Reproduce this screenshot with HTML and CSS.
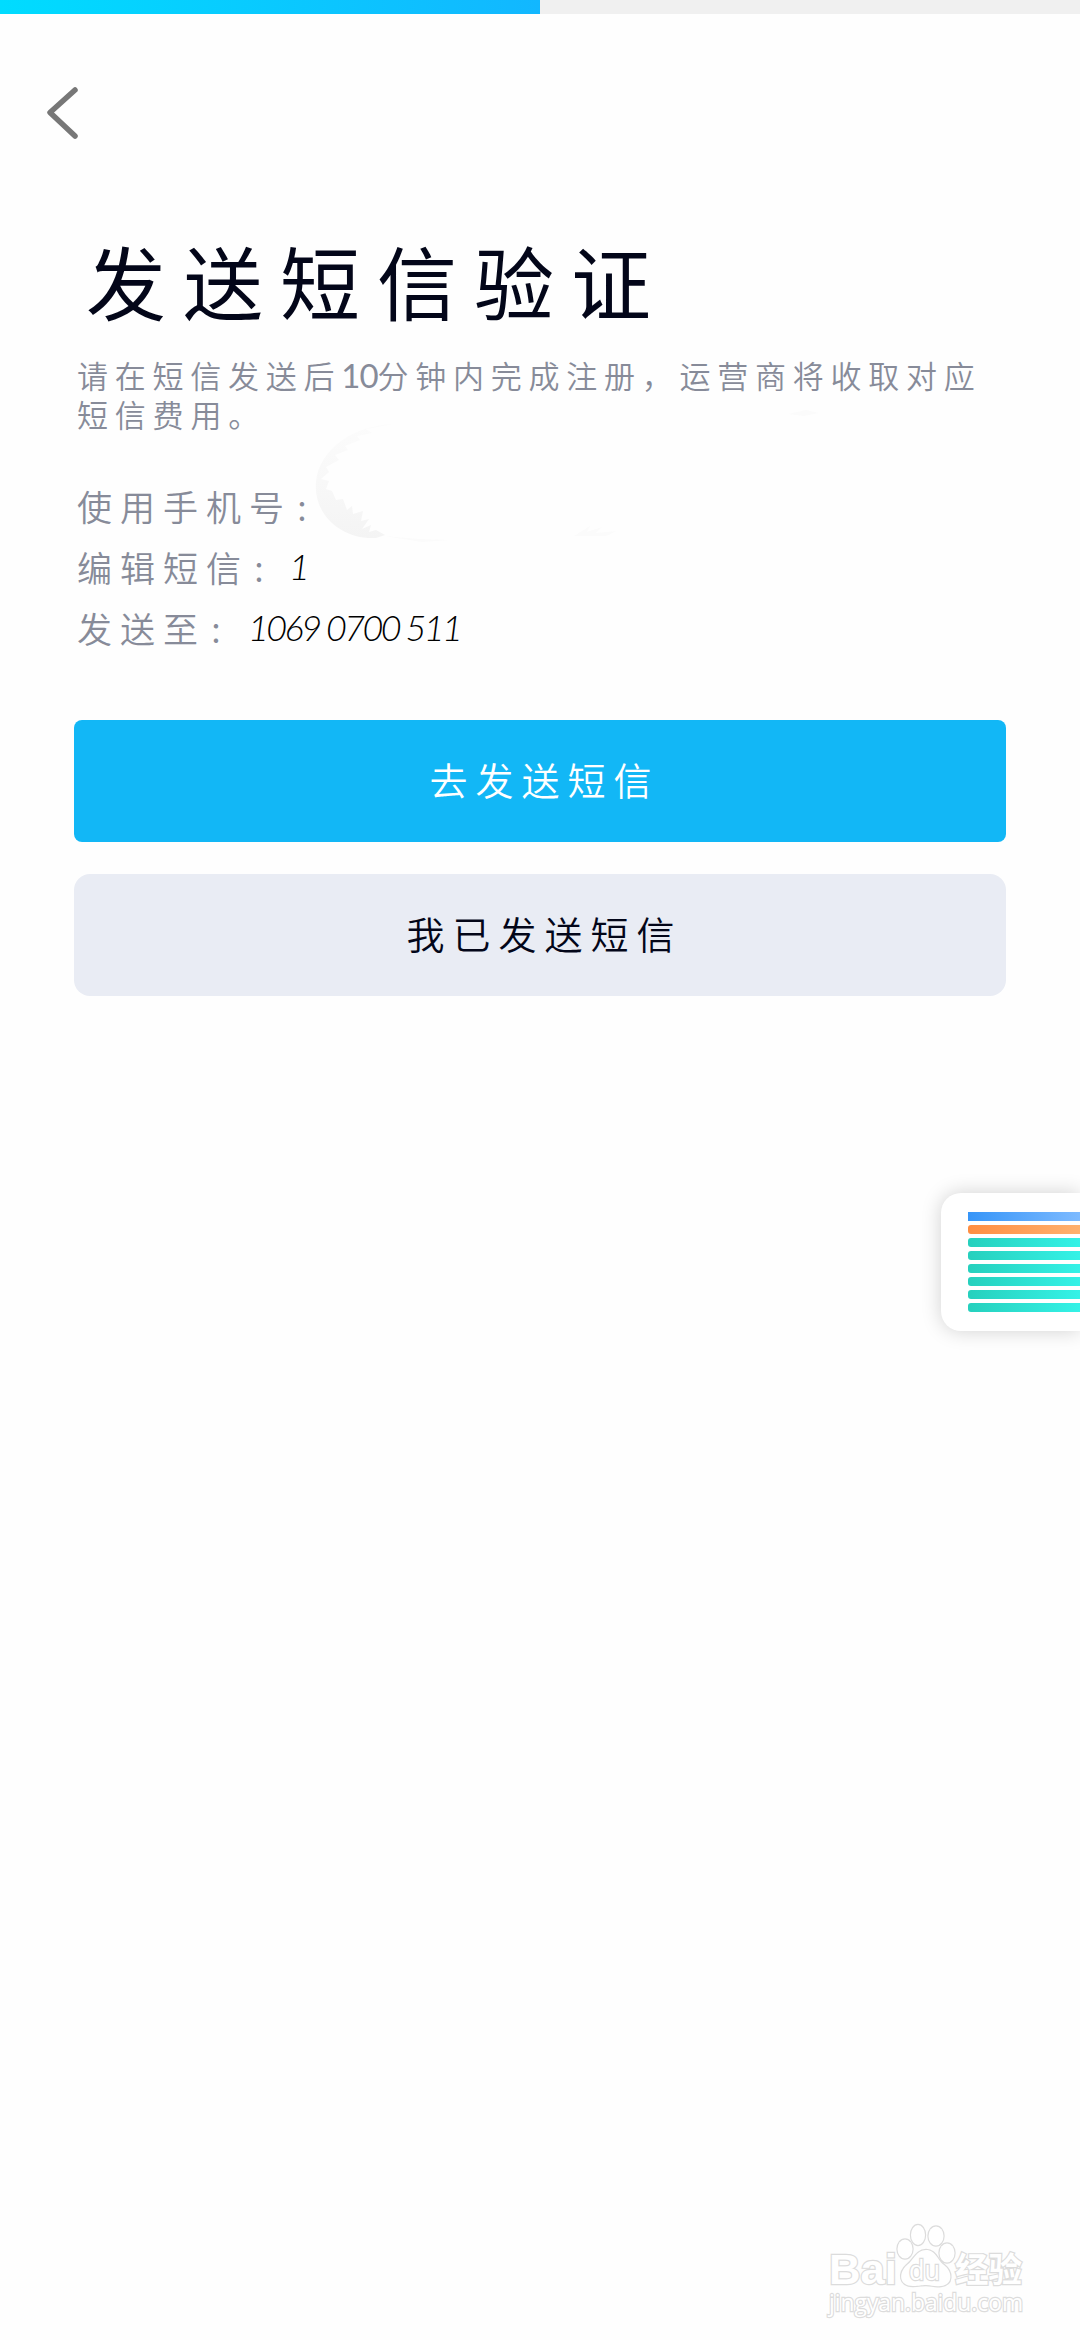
FILE: index.html
```html
<!DOCTYPE html>
<html lang="zh-CN">
<head>
<meta charset="utf-8">
<title>发送短信验证</title>
<link rel="stylesheet" href="styles.css">
</head>
<body>
<div class="progress"><div class="progress-fill"></div></div>
<header class="nav">
  <svg class="back" width="34" height="56" viewBox="0 0 34 56"><path d="M30 5 5 27.500 30 51" fill="none" stroke="#777" stroke-width="5.500" stroke-linecap="round" stroke-linejoin="round"/></svg>
</header>
<main class="content">
  <h1 class="title">发送短信验证</h1>
  <p class="desc"><span class="desc-line first">请在短信发送后<span class="ten">10</span>分钟内完成注册，运营商将收取对应</span><span class="desc-line">短信费用。</span></p>
  <dl class="info">
    <div class="row"><dt>使用手机号</dt><dd class="colon">:</dd></div>
    <div class="row"><dt>编辑短信</dt><dd class="colon">:</dd><dd class="value one">1</dd></div>
    <div class="row"><dt>发送至</dt><dd class="colon">:</dd><dd class="value">1069 0700 511</dd></div>
  </dl>
  <div class="actions">
    <button class="btn primary">去发送短信</button>
    <button class="btn secondary">我已发送短信</button>
  </div>
</main>
<svg class="smudge" width="530" height="145" viewBox="0 0 530 145">
  <defs><linearGradient id="sm" x1="0" y1="0" x2="0" y2="1"><stop offset="0" stop-color="#fcfcfc"/><stop offset="1" stop-color="#f4f4f4"/></linearGradient></defs>
  <path fill="url(#sm)" d="M80 17C40 18 5 42 2 75C-1 108 28 133 62 131L71 128 62 123 55 125 57 118 48 122 55 112 47 114 49 104 39 107 38 99 33 103 29 92 22 93 18 84 12 82 15 74 7 72 15 65 12 60 25 53 21 48 34 43 31 39 46 33 43 29 58 26 52 22Z"/>
  <path fill="#fbfbfb" d="M260 129 276 119 273 125 288 120 282 126 303 124 292 129ZM474 7 492 3 505 6 490 9ZM70 129 105 132 136 133 108 135Z"/>
</svg>
<aside class="float-card">
  <i class="bar blue"></i><i class="bar orange"></i><i class="bar"></i><i class="bar"></i><i class="bar"></i><i class="bar"></i><i class="bar"></i><i class="bar"></i>
</aside>
<svg class="watermark" width="210" height="110" viewBox="0 0 210 110">
  <g fill="#fff" stroke="#dcdcdc" stroke-width="2.400" paint-order="stroke">
    <g class="wm-bold">
      <text x="6" y="64" font-size="43" textLength="68" lengthAdjust="spacingAndGlyphs">Bai</text>
      <text class="wm-cjk" x="132" y="62" font-size="34" textLength="67" lengthAdjust="spacingAndGlyphs">经验</text>
    </g>
    <ellipse cx="82" cy="29" rx="7.500" ry="9.500"/><ellipse cx="95" cy="15" rx="7" ry="10"/><ellipse cx="113" cy="16" rx="7.500" ry="9.500"/><ellipse cx="124" cy="33" rx="7.500" ry="9.500"/>
    <path d="M103 30C93 30 91 40 84 45C75 53 76 66 90 66C97 66 98 65 103 65C109 65 111 67 118 66C130 65 130 52 121 45C114 40 113 30 103 30Z"/>
    <text class="wm-sans" x="86" y="60" font-size="27" textLength="31" lengthAdjust="spacingAndGlyphs">du</text>
    <text class="wm-sans" x="6" y="91" font-size="24" textLength="194" lengthAdjust="spacingAndGlyphs">jingyan.baidu.com</text>
  </g>
</svg>
</body>
</html>
```
FILE: styles.css
```css
* { box-sizing: border-box; }
body {
  margin: 0;
  width: 1080px;
  height: 2340px;
  position: relative;
  overflow: hidden;
  background: #fefefe;
  font-family: "Noto Sans CJK SC", sans-serif;
  font-weight: 350;
}
.progress { height: 14px; background: #f0f0f0; }
.progress-fill { width: 50%; height: 14px; background: linear-gradient(90deg, #00dcff, #12b7ff); }
.nav { height: 210px; padding: 71px 0 0 45px; }
.back { display: block; }
.content { padding: 0 74px; }
.title {
  margin: 0;
  padding-left: 12px;
  height: 110px;
  line-height: 110px;
  font-size: 80px;
  font-weight: 400;
  letter-spacing: 17px;
  color: #030619;
  white-space: nowrap;
}
.desc { margin: 21px 0 0; padding-left: 3px; color: #878b99; font-size: 31px; }
.desc-line { display: block; height: 39px; line-height: 39px; letter-spacing: 6.8px; white-space: nowrap; }
.first { letter-spacing: 6.75px; }
.ten { font-family: Lato, sans-serif; font-size: 33px; font-weight: 400; letter-spacing: -1px; }
.info { margin: 42px 0 0; padding-left: 3px; }
.row { display: flex; height: 61px; line-height: 61px; font-size: 35px; color: #878b99; white-space: nowrap; }
.row dt { letter-spacing: 8px; }
.row dd { margin: 0; }
.row .colon { width: 20px; text-align: center; }
.row .value { margin-left: 22px; color: #000; font-family: Lato, sans-serif; font-size: 36px; font-weight: 300; font-style: italic; letter-spacing: -2.6px; }
.row .one { margin-left: 20px; }
.actions { display: flex; flex-direction: column; gap: 32px; margin-top: 62px; }
.btn {
  height: 122px;
  padding: 0 0 5px 9px;
  border: 0;
  border-radius: 8px;
  font: inherit;
  font-size: 38px;
  letter-spacing: 8px;
}
.primary { background: #12b7f6; color: #fff; }
.secondary { border-radius: 16px; background: #e9ecf4; color: #030619; }
.smudge { position: absolute; left: 314px; top: 407px; }
.float-card {
  position: absolute;
  right: 0;
  top: 1193px;
  width: 139px;
  height: 138px;
  padding: 19px 0 0 27px;
  display: flex;
  flex-direction: column;
  gap: 4px;
  border-radius: 20px 0 0 20px;
  background: #fff;
  box-shadow: 0 0 20px rgba(0, 0, 0, .18);
}
.bar { height: 9px; flex: none; border-radius: 3px 0 0 3px; background: linear-gradient(90deg, #26d0bd, #35f2e7); }
.blue { border-radius: 0; background: linear-gradient(90deg, #3695f8, #7dbaff); }
.orange { background: linear-gradient(90deg, #ff8e42, #ffb16e); }
.watermark { position: absolute; left: 823px; top: 2220px; }
.wm-bold { font-family: "Liberation Sans", sans-serif; font-weight: 700; }
.wm-bold .wm-cjk { font-family: "Noto Sans CJK SC", sans-serif; }
.wm-sans { font-family: "Open Sans", sans-serif; font-weight: 400; }
```
